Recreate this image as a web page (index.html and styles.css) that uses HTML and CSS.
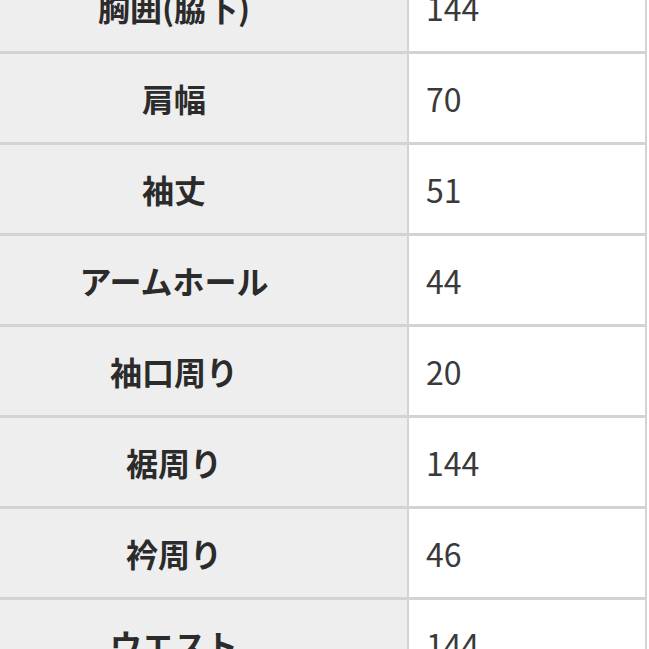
FILE: index.html
```html
<!DOCTYPE html>
<html lang="ja">
<head>
<meta charset="utf-8">
<link rel="stylesheet" href="styles.css">
</head>
<body>
<div class="sheet">
  <div class="row"><div class="label">胸囲(脇下)</div><div class="value">144</div></div>
  <div class="row"><div class="label">肩幅</div><div class="value">70</div></div>
  <div class="row"><div class="label">袖丈</div><div class="value">51</div></div>
  <div class="row"><div class="label">アームホール</div><div class="value">44</div></div>
  <div class="row"><div class="label">袖口周り</div><div class="value">20</div></div>
  <div class="row"><div class="label">裾周り</div><div class="value">144</div></div>
  <div class="row"><div class="label">衿周り</div><div class="value">46</div></div>
  <div class="row"><div class="label">ウエスト</div><div class="value">144</div></div>
</div>
</body>
</html>
```
FILE: styles.css
```css
html, body {
  margin: 0;
  padding: 0;
  background: #ffffff;
  overflow: hidden;
}
.sheet {
  width: 647px;
  margin-top: -37px;
  font-family: "Noto Sans CJK JP", "Noto Sans", sans-serif;
  font-size: 32px;
}
.row {
  display: flex;
  height: 88px;
  border-bottom: 3px solid #d3d3d3;
}
.label {
  width: 409px;
  flex: none;
  box-sizing: border-box;
  padding-right: 59px;
  background: #eeeeee;
  border-right: 2px solid #d3d3d3;
  display: flex;
  align-items: center;
  justify-content: center;
  font-weight: 700;
  color: #2b2b2b;
}
.value {
  flex: 1;
  display: flex;
  align-items: center;
  padding-left: 17px;
  border-right: 2px solid #d3d3d3;
  color: #3a3a3a;
  font-weight: 400;
}
```
